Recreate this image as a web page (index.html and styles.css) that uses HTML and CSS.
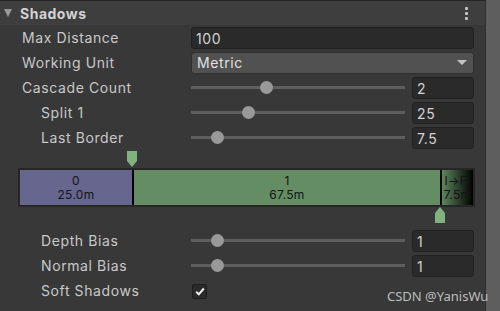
FILE: index.html
```html
<!DOCTYPE html>
<html lang="en">
<head>
    <meta charset="UTF-8">
    <title>Shadows</title>
    <link rel="stylesheet" href="styles.css">
</head>
<body>
    <div class="window">
        <div class="panel">
            <!-- Foldout header -->
            <div class="header">
                <span class="fold-arrow"></span>
                <span class="header-title">Shadows</span>
                <span class="kebab"><i></i><i></i><i></i></span>
            </div>

            <div class="row">
                <span class="label">Max Distance</span>
                <div class="control"><div class="field wide">100</div></div>
            </div>
            <div class="row">
                <span class="label">Working Unit</span>
                <div class="control"><div class="dropdown">Metric<span class="drop-arrow"></span></div></div>
            </div>
            <div class="row">
                <span class="label">Cascade Count</span>
                <div class="control">
                    <div class="slider"><span class="thumb" style="left: 35%"></span></div>
                    <div class="field num">2</div>
                </div>
            </div>
            <div class="row sub">
                <span class="label">Split 1</span>
                <div class="control">
                    <div class="slider"><span class="thumb" style="left: 26.5%"></span></div>
                    <div class="field num">25</div>
                </div>
            </div>
            <div class="row sub">
                <span class="label">Last Border</span>
                <div class="control">
                    <div class="slider"><span class="thumb" style="left: 12%"></span></div>
                    <div class="field num">7.5</div>
                </div>
            </div>

            <!-- Cascade split bar -->
            <div class="cascades">
                <span class="marker top" style="left: 127px"></span>
                <div class="cascade-bar">
                    <div class="seg seg0"><span>0</span><span>25.0m</span></div>
                    <div class="seg seg1"><span>1</span><span>67.5m</span></div>
                    <div class="seg seg-last"><span>I→F.</span><span>7.5m</span></div>
                </div>
                <span class="marker bottom" style="left: 435px"></span>
            </div>

            <div class="row sub">
                <span class="label">Depth Bias</span>
                <div class="control">
                    <div class="slider"><span class="thumb" style="left: 12%"></span></div>
                    <div class="field num">1</div>
                </div>
            </div>
            <div class="row sub">
                <span class="label">Normal Bias</span>
                <div class="control">
                    <div class="slider"><span class="thumb" style="left: 12%"></span></div>
                    <div class="field num">1</div>
                </div>
            </div>
            <div class="row sub">
                <span class="label">Soft Shadows</span>
                <div class="control">
                    <span class="checkbox">
                        <svg width="10" height="9" viewBox="0 0 10 9"><polyline points="1.2,4.8 3.8,7.3 8.8,1.5" fill="none" stroke="#f2f2f2" stroke-width="2"/></svg>
                    </span>
                </div>
            </div>

            <div class="watermark">CSDN @YanisWu</div>
        </div>
        <div class="scrollbar"></div>
    </div>
</body>
</html>
```

FILE: styles.css
```css
body {
    margin: 0;
    background: #383838;
    font-family: 'Inter', 'Noto Sans', sans-serif;
    font-size: 14px;
    letter-spacing: 0.6px;
    color: #c8c8c8;
}

.window {
    display: flex;
    height: 311px;
    overflow: hidden;
}

.panel {
    position: relative;
    width: 486px;
}

.scrollbar {
    width: 14px;
    background: #5e5e5e;
    border-left: 1px solid #2f2f2f;
}

/* Header */
.header {
    display: flex;
    align-items: center;
    height: 24px;
    background: #3e3e3e;
    border-top: 1px solid #242424;
}

.fold-arrow {
    width: 0;
    height: 0;
    margin-left: 4px;
    margin-right: 8px;
    border-left: 4px solid transparent;
    border-right: 4px solid transparent;
    border-top: 8px solid #9a9a9a;
}

.header-title {
    font-weight: bold;
    font-size: 14px;
    letter-spacing: 0.5px;
    color: #d2d2d2;
}

.kebab {
    margin-left: auto;
    margin-right: 17px;
    display: flex;
    flex-direction: column;
    gap: 2px;
}

.kebab i {
    width: 3px;
    height: 3px;
    background: #c4c4c4;
    border-radius: 1px;
}

/* Rows */
.row {
    display: flex;
    align-items: center;
    height: 25px;
}

.label {
    width: 169px;
    padding-left: 22px;
    flex-shrink: 0;
    white-space: nowrap;
}

.row.sub .label {
    width: 150px;
    padding-left: 41px;
}

.control {
    flex: 1;
    display: flex;
    align-items: center;
    margin-right: 11px;
}

.field {
    height: 22px;
    line-height: 21px;
    padding-left: 4px;
    box-sizing: border-box;
    background: #2a2a2a;
    border: 1px solid #212121;
    border-radius: 3px;
    color: #d2d2d2;
    font-size: 14px;
}

.field.wide {
    flex: 1;
}

.field.num {
    width: 62px;
}

.dropdown {
    flex: 1;
    display: flex;
    align-items: center;
    height: 22px;
    padding-left: 5px;
    box-sizing: border-box;
    background: #515151;
    border: 1px solid #303030;
    border-radius: 3px;
    color: #e0e0e0;
    font-size: 14px;
}

.drop-arrow {
    margin-left: auto;
    margin-right: 6px;
    width: 0;
    height: 0;
    border-left: 5px solid transparent;
    border-right: 5px solid transparent;
    border-top: 5px solid #c4c4c4;
}

.slider {
    position: relative;
    flex: 1;
    height: 3px;
    margin-right: 7px;
    background: #5e5e5e;
}

.thumb {
    position: absolute;
    top: -5px;
    width: 13px;
    height: 13px;
    margin-left: -6px;
    border-radius: 50%;
    background: #999999;
}

.checkbox {
    display: flex;
    align-items: center;
    justify-content: center;
    width: 15px;
    height: 15px;
    margin-left: 1px;
    margin-top: 1px;
    box-sizing: border-box;
    background: #2a2a2a;
    border: 1px solid #1e1e1e;
    border-radius: 2px;
}

/* Cascade split bar */
.cascades {
    position: relative;
    padding: 18px 10px 21px 18px;
}

.cascade-bar {
    display: flex;
    height: 35px;
    padding: 2px;
    background: #262626;
    color: #141414;
    font-size: 12px;
    letter-spacing: 0.3px;
    line-height: 14px;
    text-align: center;
}

.seg {
    display: flex;
    flex-direction: column;
    justify-content: center;
    align-items: center;
    overflow: hidden;
}

.seg0 {
    width: 112px;
    background: #66668f;
}

.seg1 {
    width: 306px;
    border-left: 2px solid #000;
    background: #648d64;
}

.seg-last {
    flex: 1;
    border-left: 2px solid #000;
    background: linear-gradient(to right, #5e865e, #000);
}

.seg span {
    white-space: nowrap;
}

.marker {
    position: absolute;
    width: 10px;
    height: 16px;
    background: #7fb27f;
}

.marker.top {
    top: 1px;
    clip-path: polygon(0 0, 100% 0, 100% 62%, 50% 100%, 0 62%);
}

.marker.bottom {
    bottom: 5px;
    clip-path: polygon(50% 0, 100% 38%, 100% 100%, 0 100%, 0 38%);
}

.watermark {
    position: absolute;
    left: 387px;
    top: 287px;
    white-space: nowrap;
    font-family: 'Noto Sans', sans-serif;
    font-size: 13px;
    letter-spacing: 0;
    color: #bcbcbc;
}
```
